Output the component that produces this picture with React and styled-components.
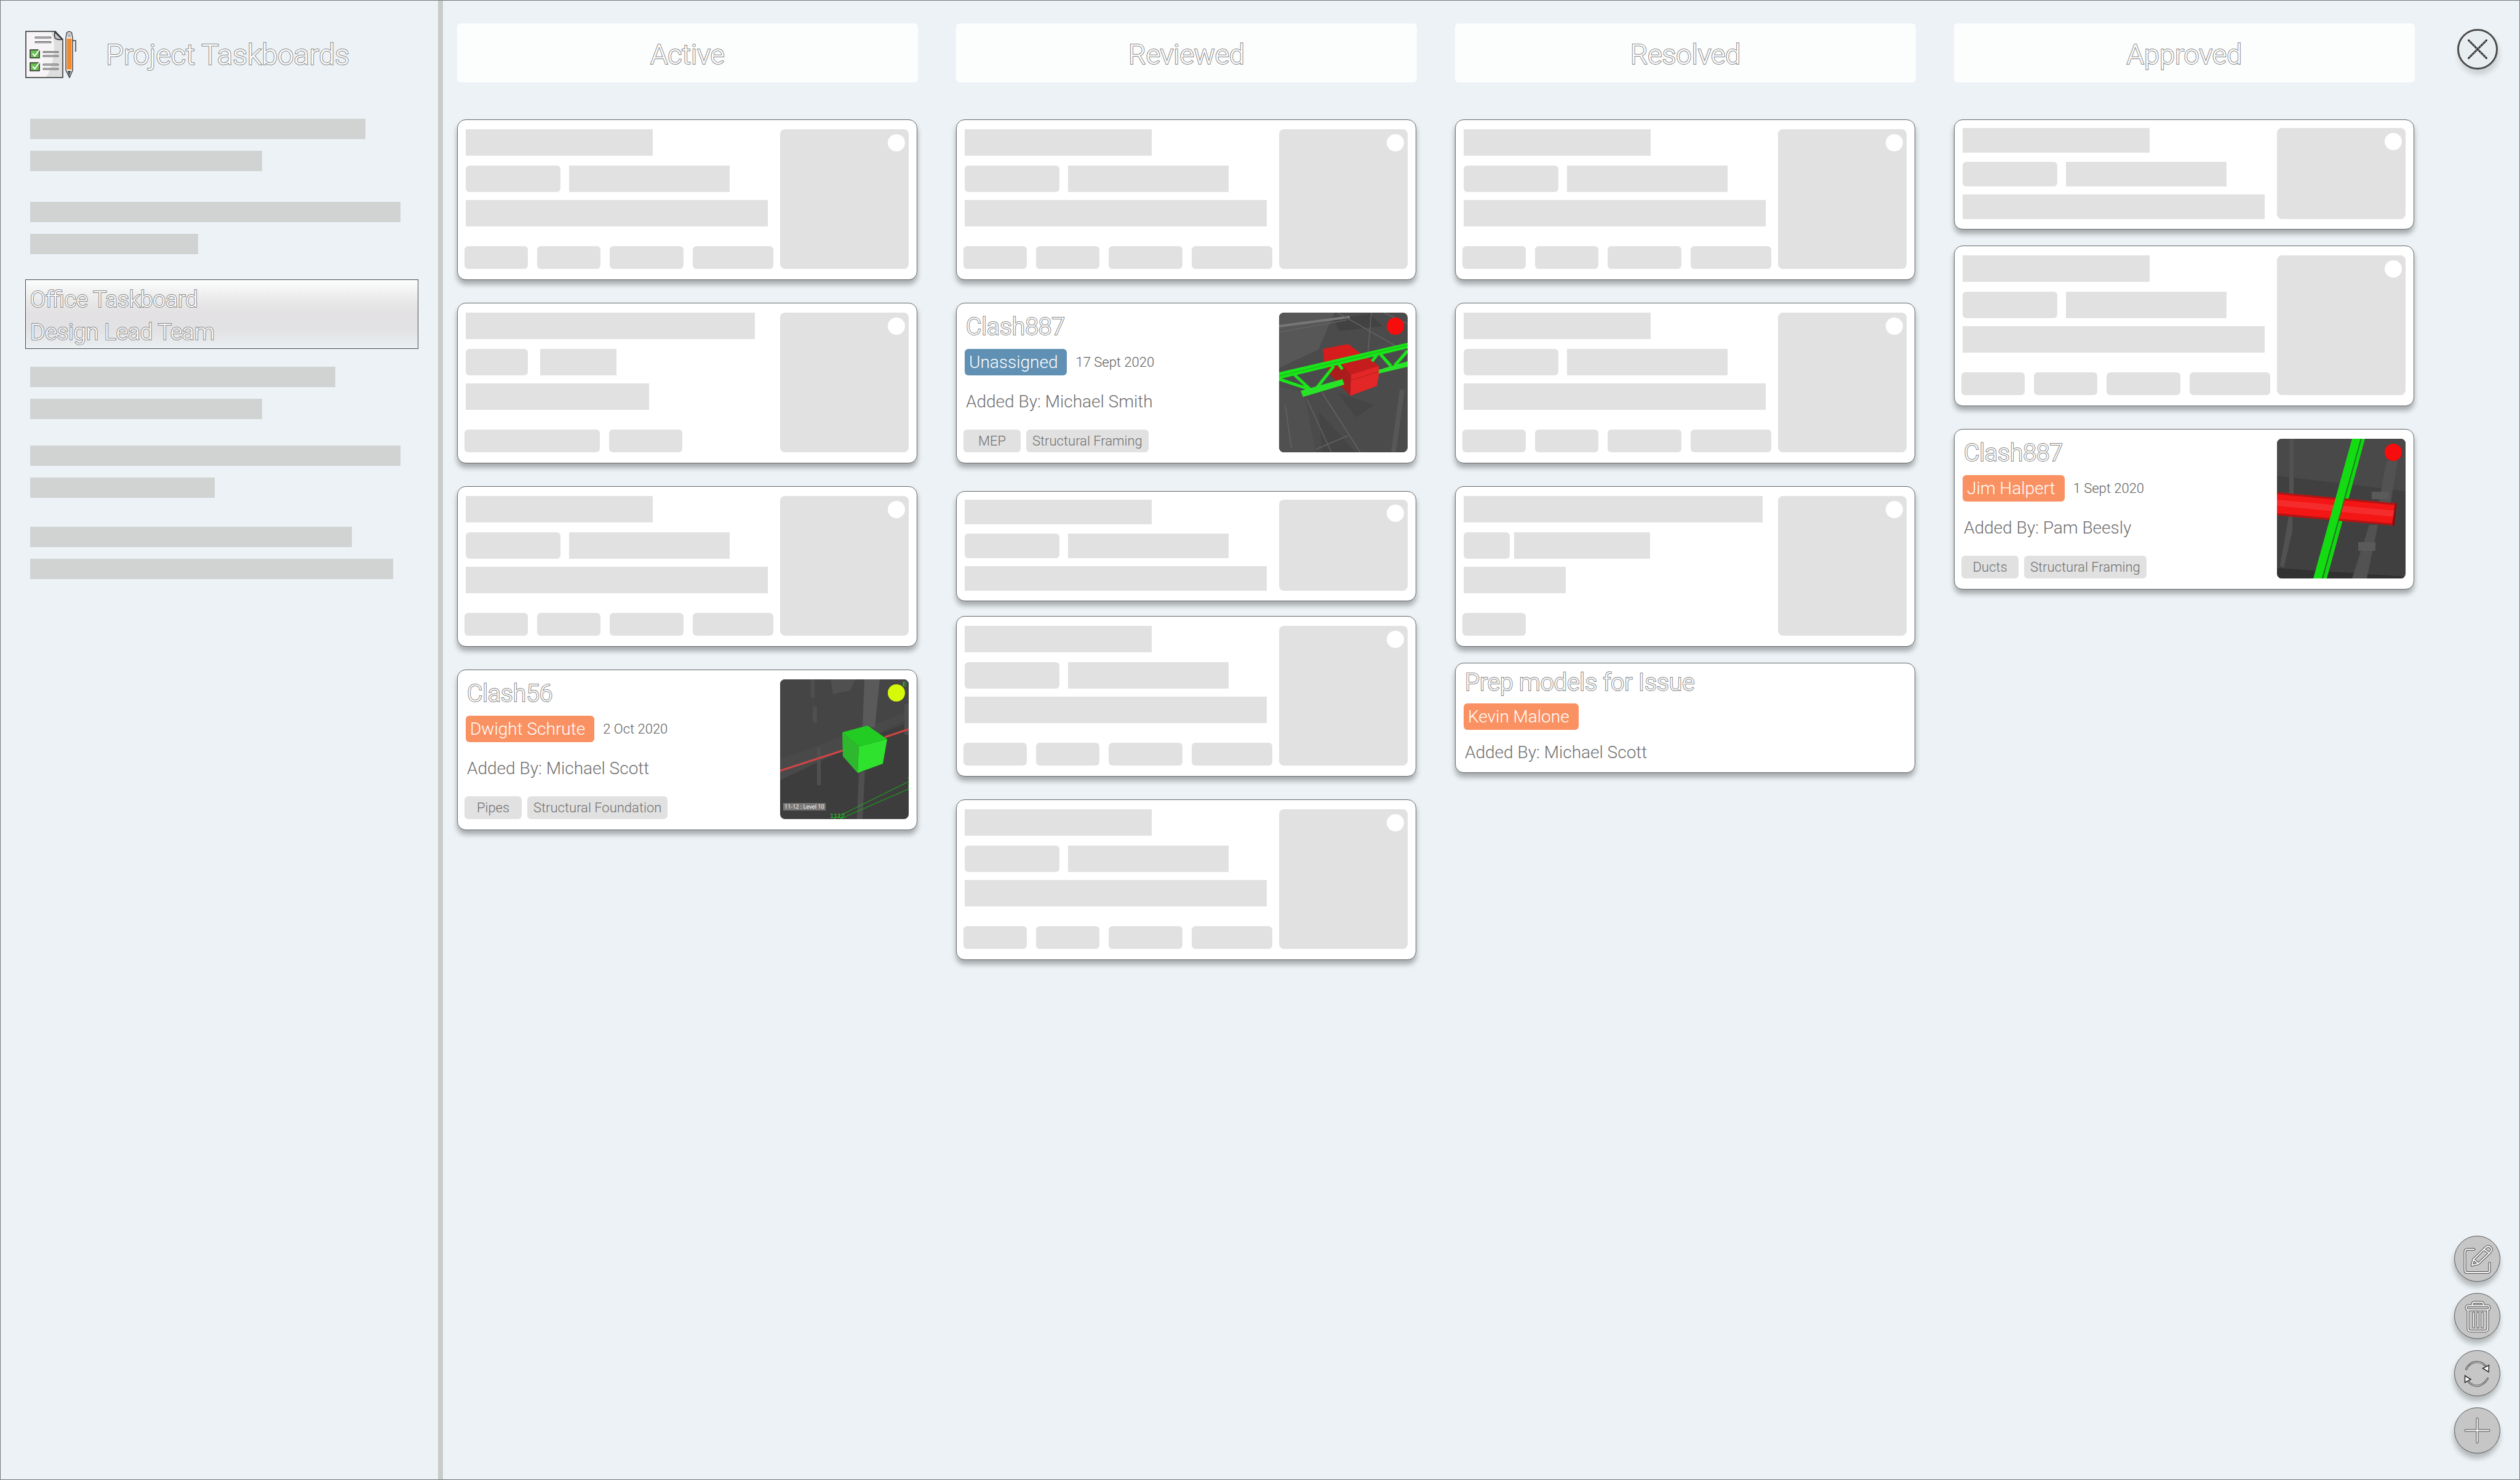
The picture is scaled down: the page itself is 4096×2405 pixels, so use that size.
import React from "react";
import styled, { createGlobalStyle, css } from "styled-components";

const GlobalStyle = createGlobalStyle`
  *, *::before, *::after { box-sizing: border-box; }
  body { margin: 0; background: #ecf2f5; font-family: Roboto, "Liberation Sans", sans-serif; font-weight: 300; }
  h1, h2, h3, p, ul { margin: 0; padding: 0; font-weight: 300; }
  ul { list-style: none; }
`;

const outlined = css`
  color: #ffffff;
  -webkit-text-stroke: 2px #838383;
  paint-order: stroke fill;
`;

const Page = styled.div`
  display: flex;
  min-height: 100vh;
  border: 1px solid #77787c;
  background: #ecf2f5;
`;

/* Sidebar */
const Sidebar = styled.nav`
  flex: 0 0 719px;
  padding: 49px 32px 40px 40px;
  border-right: 8px solid #c9cbcb;
`;
const Brand = styled.header`
  display: flex;
  align-items: center;
  gap: 48px;
  margin-bottom: 66px;
`;
const BrandTitle = styled.h1`
  ${outlined}
  font-size: 47px;
  line-height: 54px;
`;
const BoardItem = styled.li`
  margin-top: ${(p) => p.$space}px;
`;
const BoardStub = styled.div`
  display: flex;
  flex-direction: column;
  gap: 19px;
  padding-left: 8px;
`;
const StubLine = styled.span`
  width: ${(p) => p.$w}px;
  height: 33px;
  background: #d1d3d2;
`;
const BoardLink = styled.a`
  ${outlined}
  display: block;
  padding: 5px 7px 0;
  border: 1px solid #4c4c4e;
  background: linear-gradient(#fcfdfd, #ececec 25%, #e2e0e2 50%, #e2e1e3 72%, #eaeff2);
  font-size: 37px;
  line-height: 53px;
  text-decoration: none;
`;
const LinkLine = styled.span`
  display: block;
`;

/* Board */
const Board = styled.main`
  flex: 1;
  display: grid;
  grid-template-columns: repeat(4, 1fr);
  gap: 62px;
  align-items: start;
  padding: 37px 0 40px 23px;
`;
const Column = styled.section`
  display: flex;
  flex-direction: column;
`;
const ColumnTitle = styled.h2`
  ${outlined}
  margin-bottom: 60px;
  padding: 24px 0 18px;
  border-radius: 6px;
  background: #fcfdfd;
  font-size: 45px;
  line-height: 54px;
  text-align: center;
`;
const cardPadding = {
  full: "15px 13px 17px",
  short: "13px 13px 16px",
  note: "8px 13px 16px",
};
const CardBox = styled.article`
  display: flex;
  justify-content: space-between;
  margin: 0 1px ${(p) => p.$after || 37}px 0;
  padding: ${(p) => cardPadding[p.$size || "full"]};
  border: 1px solid #66686a;
  border-radius: 14px;
  background: #ffffff;
  box-shadow: 0 7px 8px rgba(0, 0, 0, 0.3);
`;
const CardBody = styled.div`
  display: flex;
  flex-direction: column;
`;
const Thumb = styled.div`
  position: relative;
  flex: 0 0 209px;
  overflow: hidden;
  border-radius: 8px;
  background: #e1e1e1;
`;
const Dot = styled.span`
  position: absolute;
  top: 8px;
  right: 6px;
  width: 28px;
  height: 28px;
  border-radius: 50%;
  background: ${(p) => p.$color || "#ffffff"};
`;
const SkeletonRow = styled.div`
  display: flex;
  gap: ${(p) => p.$gap || 14}px;
  height: ${(p) => (p.$short ? 40 : 43)}px;
  margin-bottom: ${(p) => p.$after || 0}px;
`;
const Block = styled.span`
  width: ${(p) => p.$w}px;
  border-radius: ${(p) => (p.$round ? 6 : 0)}px;
  background: #e1e1e1;
`;
const TagRow = styled.div`
  display: flex;
  gap: ${(p) => p.$gap || 15}px;
  height: 37px;
  margin-left: -2px;
`;

const CardTitle = styled.h3`
  ${outlined}
  padding-left: 2px;
  font-size: 39px;
  line-height: 47px;
`;
const Meta = styled.div`
  display: flex;
  align-items: center;
  gap: 14px;
  margin: ${(p) => (p.$note ? "10px 0 20px" : "12px 0 26px")};
`;
const Badge = styled.span`
  padding: 0 15px 0 7px;
  border-radius: 6px;
  background: ${(p) => (p.$open ? "#6090b3" : "#fa9163")};
  color: #ffffff;
  font-size: 28px;
  line-height: 43px;
`;
const DateText = styled.time`
  color: #606060;
  font-size: 22px;
  line-height: 26px;
`;
const Author = styled.p`
  padding-left: 2px;
  margin-bottom: ${(p) => (p.$note ? 0 : 29)}px;
  color: #707070;
  font-size: 28px;
  line-height: 33px;
`;
const Tag = styled.span`
  min-width: 93px;
  padding: 0 10px;
  border-radius: 6px;
  background: #e1e1e1;
  color: #707070;
  font-size: 22px;
  line-height: 37px;
  text-align: center;
`;

/* Action rail */
const Rail = styled.aside`
  display: flex;
  flex-direction: column;
  justify-content: space-between;
  align-items: center;
  padding: 46px 31px 42px 64px;
`;
const RoundButton = styled.button`
  display: block;
  width: 75px;
  height: 75px;
  padding: 0;
  border: 1px solid #5a5a5a;
  border-radius: 50%;
  background: #c6c6c6;
  box-shadow: -1px 8px 9px rgba(0, 0, 0, 0.24);
`;
const CloseButton = styled(RoundButton)`
  width: 66px;
  height: 66px;
  border: 3px solid #4a4a4a;
  background: #e8edf0;
  box-shadow: inset 0 0 0 1px #f8fafa, 2px 8px 10px rgba(0, 0, 0, 0.14);
`;
const Tools = styled.div`
  display: flex;
  flex-direction: column;
  gap: 18px;
`;
const Icon = styled.svg`
  display: block;
  width: 100%;
  height: 100%;
`;

function Traced({ children, width = 2 }) {
  return (
    <g fill="none" strokeLinecap="round" strokeLinejoin="round">
      <g stroke="#4a4a4a" strokeWidth={width + 2}>{children}</g>
      <g stroke="#ffffff" strokeWidth={width}>{children}</g>
    </g>
  );
}

const toolIcons = {
  Edit: (
    <Traced>
      <path d="M-5-15.500h-11q-4 0-4 4v30q0 4 4 4h32q4 0 4-4V7" />
      <path d="M-8.600 10.600l2.600-9.600L13.500-18q4-4 8-.5t-1 8.500L1.800 8zM-6 1l7.800 7M11-15.500l8.500 6.500" />
    </Traced>
  ),
  Delete: (
    <Traced>
      <path d="M-8-17.500v-1q0-4 4-4H6q4 0 4 4v1" />
      <rect x="-18" y="-17" width="38" height="7" rx="3.500" />
      <path d="M-15-10v30q0 4.500 4.500 4.500h23Q17 24.500 17 20v-30M-6-5v23M1-5v23M8-5v23" />
    </Traced>
  ),
  Refresh: (
    <>
      <Traced width={1}>
        <path d="M-18-6.500Q-12-18.500 0-18.500 10-18.500 16-8M17 8.500Q10 20.500-1 20.500-10 20.500-16 11" />
      </Traced>
      <path d="M19-13l-.5 11L9-8zM-20 4l9.500 6L-20 15z" fill="#ffffff" stroke="#2c2c2c" strokeWidth="1.500" />
    </>
  ),
  Add: (
    <Traced>
      <path d="M-19 0h38M0-19v38" />
    </Traced>
  ),
};

function BrandIcon() {
  return (
    <svg width="83" height="77" viewBox="0 0 83 77" aria-hidden="true">
      <path d="M1 1h48l12 13v62H1z" fill="#f6f4f6" stroke="#2c2c2c" strokeWidth="1.500" />
      <path d="M42 2q8 18 4 40T34 75h26V15L48 2z" fill="#dedede" />
      <path d="M48 2q-2 10 3 11.500t9 .5z" fill="#c4c4c4" stroke="#2c2c2c" strokeWidth="1.500" />
      <Traced width={1}>
        <path d="M17 11h24M17 18.500h24M30 34.500h23M30 41h23M30 55h23M30 62h23" />
      </Traced>
      <g fill="#69bf52" stroke="#2c2c2c" strokeWidth="1.500">
        <rect x="8" y="31" width="15" height="13" />
        <rect x="8" y="52" width="15" height="13" />
      </g>
      <g fill="none" stroke="#ffffff" strokeWidth="2">
        <path d="M12 37l3.500 4L25 28M12 58l3.500 4L25 49" />
      </g>
      <path d="M77 16h5v18" fill="none" stroke="#3a3a3a" strokeWidth="1.500" />
      <path d="M66 12l1.500-9q4-3 8 0l1.500 9v52l-5 12-6-12z" fill="#ffffff" stroke="#2c2c2c" strokeWidth="1.300" />
      <path d="M68.500 4h6v7h-6z" fill="#b9b9b9" />
      <path d="M67.500 12.500h8V63h-8z" fill="#f58a2c" />
      <path d="M68.500 65h6L71.500 74z" fill="#555555" />
    </svg>
  );
}

function CubeScene() {
  return (
    <Icon viewBox="0 0 209 227" preserveAspectRatio="none">
      <rect width="209" height="227" fill="#3d3d3d" />
      <path d="M0 0h209v70L0 150z" fill="#454545" />
      <path d="M82 0h40l-8 18-28 6z" fill="#505050" />
      <path d="M0 130l209-78v12L0 164z" fill="#494949" />
      <path d="M137 0h25l-8 78h-20z" fill="#5a5a5a" />
      <path d="M50 0h6v30h-6zM53 44h7v26h-7zM60 110h6v62h-6zM128 150h10l-4 77h-9zM202 40h7v50h-7z" fill="#4f4f4f" />
      <path d="M0 148.500l105-34M170 94l39-13" stroke="#d24545" strokeWidth="3" />
      <path d="M101 86l41-11 32 22-46 12z" fill="#22cc22" />
      <path d="M101 86l27 23-2 43-24-27z" fill="#2eb82e" />
      <path d="M128 109l46-12-7 40-41 15z" fill="#2ee22e" />
      <path d="M209 166L86 227M209 178L97 227M207 160h2M209 170v8" fill="none" stroke="#17b517" />
      <rect x="5" y="201" width="69" height="12" fill="#777777" />
      <text x="7" y="210" fontFamily="Open Sans, sans-serif" fontSize="9" fontWeight="400" fill="#ffffff">11-12 : Level 10</text>
      <text x="81" y="225" fontFamily="Liberation Mono, monospace" fontSize="10" fontWeight="400" fill="#16dd16">1112</text>
      <text x="199" y="11" fontFamily="Liberation Mono, monospace" fontSize="11" fontWeight="400" fill="#16dd16">E</text>
    </Icon>
  );
}

function TrussScene() {
  return (
    <Icon viewBox="0 0 209 227" preserveAspectRatio="none">
      <rect width="209" height="227" fill="#4b4b4b" />
      <path d="M0 0h90L64 60 0 90z" fill="#575757" />
      <path d="M88 10l60-8 20 20-70 8z" fill="#424242" />
      <path d="M0 120l40 10 20 97H0z" fill="#505050" />
      <path d="M64 160l60 67H70zM95 130l60 20-30 20z" fill="#454545" />
      <path d="M196 125h8l-14 102h-8z" fill="#575757" />
      <path d="M0 22L115 7" stroke="#777777" strokeWidth="4" />
      <path d="M0 32l110-20M95 0l114 65M150 0l-6 70M45 140l40 87M70 130l62 97M60 222l52-22M170 0l39 18M10 150l10 70" fill="none" stroke="#636363" strokeWidth="1.500" />
      <path d="M71 59l41-8 20 15 30 21v14l-3 18-43 16-16-18-17-16-10-20z" fill="#d61c1c" />
      <path d="M73 81l29 2 15 18-1 34-33-34z" fill="#ab1c1c" />
      <path d="M102 83l45-9 15 13-45 14z" fill="#c51d1d" />
      <path d="M117 101l45-14v14l-3 18-43 16z" fill="#e32727" />
      <path d="M117 110l45-14" stroke="#b51d1d" />
      <g stroke="#1be51b" strokeWidth="5" fill="none">
        <path d="M0 108l51 17M25 101l26 24M89 87L59 125M97 84l6 8M159 69l-8 10M165 68l17 19M209 62l-21 24" />
      </g>
      <path d="M0 97l209-48v9L0 108z" fill="#1be51b" />
      <path d="M0 103l209-50" stroke="#17c817" strokeWidth="2" />
      <path d="M35 127l68-19 3 9-67 20zM162 93l47-14v9l-47 11z" fill="#28e428" />
    </Icon>
  );
}

function PipeScene() {
  return (
    <Icon viewBox="0 0 209 227" preserveAspectRatio="none">
      <rect width="209" height="227" fill="#404040" />
      <path d="M0 0h209v85L0 60z" fill="#494949" />
      <path d="M0 210l209 14v3H0z" fill="#313131" />
      <path d="M20 0h7v90h-7zM19 126h6v24l-14 60-6-4zM178 36h18l-14 86h-20zM150 140h14l-18 87h-24z" fill="#525252" />
      <path d="M132 168h28v14h-28zM154 86h28v12h-28z" fill="#5a5a5a" />
      <path d="M143 0h-6L75 227h6z" fill="#13d613" />
      <path d="M0 87l195 18-4 36L0 124.500z" fill="#f41515" />
      <path d="M0 99l194 18-2 10L0 109z" fill="#f52c2c" />
      <path d="M0 87l195 18v3L0 90zM0 121l191 17v3L0 124.500z" fill="#b01414" />
      <path d="M195 105l-4 36-4-1 5-35z" fill="#7c1212" />
      <path d="M122 0h14L73 227H59z" fill="#13dc13" />
      <path d="M137 0L74 227" stroke="#178017" strokeWidth="1.500" />
    </Icon>
  );
}

const scenes = { cube: CubeScene, truss: TrussScene, pipe: PipeScene };

const standard = { rows: [[304], [154, 261], [491]], tags: [103, 103, 120, 131] };
const short = { size: "short", rows: [[304], [154, 261], [491]] };

const columns = [
  {
    title: "Active",
    cards: [
      standard,
      { rows: [[470], [101, 124], [298]], rowGap: 20, tags: [220, 119] },
      standard,
      { title: "Clash56", who: "Dwight Schrute", date: "2 Oct 2020", by: "Michael Scott", labels: ["Pipes", "Structural Foundation"], scene: "cube", dot: "#d6f90a" },
    ],
  },
  {
    title: "Reviewed",
    cards: [
      standard,
      { title: "Clash887", who: "Unassigned", open: true, date: "17 Sept 2020", by: "Michael Smith", labels: ["MEP", "Structural Framing"], scene: "truss", dot: "#f70d0d", after: 45 },
      { ...short, after: 24 },
      standard,
      standard,
    ],
  },
  {
    title: "Resolved",
    cards: [
      standard,
      standard,
      { rows: [[486], [75, 221], [166]], rowGap: 7, tags: [103], after: 26 },
      { size: "note", title: "Prep models for Issue", who: "Kevin Malone", by: "Michael Scott" },
    ],
  },
  {
    title: "Approved",
    cards: [
      { ...short, after: 26 },
      standard,
      { title: "Clash887", who: "Jim Halpert", date: "1 Sept 2020", by: "Pam Beesly", labels: ["Ducts", "Structural Framing"], scene: "pipe", dot: "#f70d0d" },
    ],
  },
];

const boards = [
  { lines: [545, 377], space: 0 },
  { lines: [602, 273], space: 50 },
  { text: ["Office Taskboard", "Design Lead Team"], space: 41 },
  { lines: [496, 377], space: 29 },
  { lines: [602, 300], space: 43 },
  { lines: [523, 590], space: 47 },
];

function SkeletonCard({ card }) {
  const isShort = card.size === "short";
  const after = isShort ? [15, 13, 0] : [16, 13, 32];
  return (
    <CardBox $size={card.size} $after={card.after}>
      <CardBody>
        {card.rows.map((widths, row) => (
          <SkeletonRow key={row} $short={isShort} $gap={card.rowGap} $after={after[row]}>
            {widths.map((w, i) => (
              <Block key={i} $w={w} $round={row === 1 && i === 0} />
            ))}
          </SkeletonRow>
        ))}
        {card.tags && (
          <TagRow>
            {card.tags.map((w, i) => (
              <Block key={i} $w={w} $round />
            ))}
          </TagRow>
        )}
      </CardBody>
      <Thumb>
        <Dot />
      </Thumb>
    </CardBox>
  );
}

function TaskCard({ card }) {
  const Scene = scenes[card.scene];
  const isNote = card.size === "note";
  return (
    <CardBox $size={card.size} $after={card.after}>
      <CardBody>
        <CardTitle>{card.title}</CardTitle>
        <Meta $note={isNote}>
          <Badge $open={card.open}>{card.who}</Badge>
          {card.date && <DateText>{card.date}</DateText>}
        </Meta>
        <Author $note={isNote}>Added By: {card.by}</Author>
        {card.labels && (
          <TagRow $gap={9}>
            {card.labels.map((label) => (
              <Tag key={label}>{label}</Tag>
            ))}
          </TagRow>
        )}
      </CardBody>
      {Scene && (
        <Thumb>
          <Scene />
          <Dot $color={card.dot} />
        </Thumb>
      )}
    </CardBox>
  );
}

export default function App() {
  return (
    <>
      <GlobalStyle />
      <Page>
        <Sidebar>
          <Brand>
            <BrandIcon />
            <BrandTitle>Project Taskboards</BrandTitle>
          </Brand>
          <ul>
            {boards.map((board, i) => (
              <BoardItem key={i} $space={board.space}>
                {board.text ? (
                  <BoardLink href="#office">
                    {board.text.map((line) => (
                      <LinkLine key={line}>{line}</LinkLine>
                    ))}
                  </BoardLink>
                ) : (
                  <BoardStub>
                    {board.lines.map((w, n) => (
                      <StubLine key={n} $w={w} />
                    ))}
                  </BoardStub>
                )}
              </BoardItem>
            ))}
          </ul>
        </Sidebar>
        <Board>
          {columns.map((column) => (
            <Column key={column.title}>
              <ColumnTitle>{column.title}</ColumnTitle>
              {column.cards.map((card, i) =>
                card.title ? <TaskCard key={i} card={card} /> : <SkeletonCard key={i} card={card} />
              )}
            </Column>
          ))}
        </Board>
        <Rail>
          <CloseButton type="button" aria-label="Close">
            <Icon viewBox="-30 -30 60 60">
              <path d="M-14.500-14.500l29 29M14.500-14.500l-29 29" stroke="#2e2e2e" strokeWidth="3" strokeLinecap="round" />
              <path d="M-13-13l26 26M13-13l-26 26" stroke="#ffffff" strokeWidth="1" strokeDasharray="2 3" />
            </Icon>
          </CloseButton>
          <Tools>
            {Object.entries(toolIcons).map(([name, drawing]) => (
              <RoundButton key={name} type="button" aria-label={name}>
                <Icon viewBox="-36.500 -36.500 73 73">{drawing}</Icon>
              </RoundButton>
            ))}
          </Tools>
        </Rail>
      </Page>
    </>
  );
}
